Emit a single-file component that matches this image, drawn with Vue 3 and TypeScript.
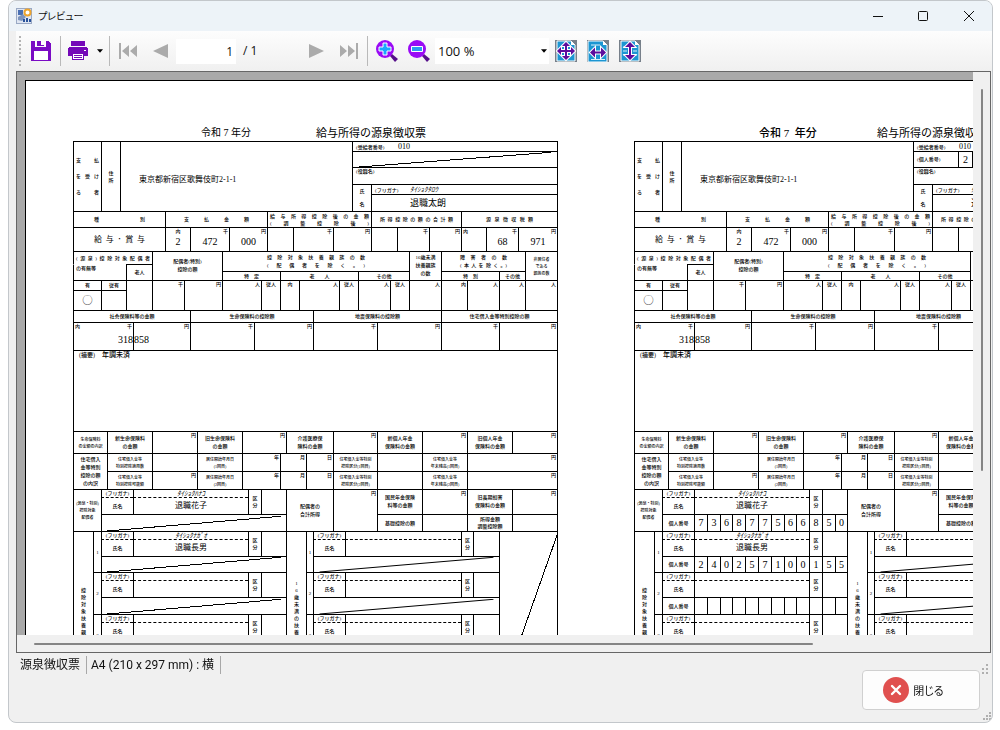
<script setup lang="ts">
import { ref } from 'vue'

interface Cell {
  /** text, one entry per line separated by \n */
  t?: string
  /** small caption placed before the text */
  l?: string
  /** units in the cell's top corners, "left|right" or "right" */
  u?: string
  cs?: number
  rs?: number
  k?: string
  slash?: boolean
}
interface Band {
  cols: number[]
  rows: { h: number; cells: Cell[] }[]
}
interface Slip {
  id: string
  era: string
  bands: Band[]
}

const cell = (t = '', o: Omit<Cell, 't'> = {}): Cell => ({ t, ...o })
const unit = (u = '', t = '', o: Omit<Cell, 't' | 'u'> = {}): Cell => ({ t, u, ...o, k: `top num ${o.k ?? ''}` })

function numberRow(withNumber: boolean, digits: string): Cell[] {
  if (!withNumber) return [cell('', { cs: 13, slash: true })]
  return [cell('個人番号'), ...Array.from({ length: 12 }, (_, i) => cell(digits[i] ?? '', { k: 'num' }))]
}

function headBand(withNumber: boolean): Band {
  const second: Cell[] = withNumber
    ? [cell('', { l: '(個人番号)', cs: 2, k: 'lead' }), cell('2', { k: 'num' }), ...Array.from({ length: 11 }, () => cell())]
    : [cell('', { cs: 14, slash: true })]
  return {
    cols: [28, 19, 232, 19, 26, 14, 13, 13, 14, 13, 13, 14, 13, 13, 14, 13, 13],
    rows: [
      {
        h: 10,
        cells: [
          cell('支　払\nを受け\nる　者', { rs: 5, k: 'spread tall' }),
          cell('住\n所', { rs: 5 }),
          cell('東京都新宿区歌舞伎町2-1-1', { rs: 5, k: 'address' }),
          cell('010', { l: '(受給者番号)', cs: 14, k: 'lead code' }),
        ],
      },
      { h: 16, cells: second },
      { h: 17, cells: [cell('', { l: '(役職名)', cs: 14, k: 'lead top' })] },
      {
        h: 10,
        cells: [cell('氏\n名', { rs: 2, k: 'person-label' }), cell('ﾀｲｼｮｸﾀﾛｳ', { l: '(フリガナ)', cs: 13, k: 'lead kana' })],
      },
      { h: 17, cells: [cell('退職太朗', { cs: 13, k: 'fullname' })] },
    ],
  }
}

const payBand: Band = {
  cols: [92, 25, 39, 38, 26, 40, 38, 26, 32, 32, 25, 32, 39],
  rows: [
    {
      h: 16,
      cells: [
        cell('種別', { k: 'spread wide' }),
        cell('支払金額', { cs: 3, k: 'spread mid' }),
        cell('給与所得控除後の金額\n(調整控除後)', { cs: 3, k: 'spread' }),
        cell('所得控除の額の合計額', { cs: 3, k: 'spread near' }),
        cell('源泉徴収税額', { cs: 3, k: 'spread broad' }),
      ],
    },
    {
      h: 24,
      cells: [
        cell('給与･賞与', { k: 'kind spread' }),
        unit('内', '2', { k: 'midunit' }),
        unit('千', '472'),
        unit('円', '000'),
        cell(),
        unit('千'),
        unit('円'),
        cell(),
        unit('千'),
        unit('円'),
        unit('内|'),
        unit('千', '68'),
        unit('円', '971'),
      ],
    },
  ],
}

const familyBand: Band = {
  cols: [28, 25, 26, 32, 38, 39, 19, 19, 40, 19, 32, 19, 32, 26, 32, 26, 32],
  rows: [
    {
      h: 13,
      cells: [
        cell('(源泉)控除対象配偶者', { cs: 3, k: 'spread' }),
        cell('配偶者(特別)\n控除の額', { cs: 2, rs: 3, k: 'double' }),
        cell('控除対象扶養親族の数\n(配偶者を除く。)', { cs: 7, rs: 2, k: 'spread wide double' }),
        cell('16歳未満\n扶養親族\nの数', { rs: 3, k: 'double' }),
        cell('障害者の数\n(本人を除く。)', { cs: 3, rs: 2, k: 'spread mid double' }),
        cell('非居住者\nである\n親族の数', { rs: 3, k: 'mini' }),
      ],
    },
    { h: 7, cells: [cell('の有無等', { cs: 2, rs: 2, k: 'open lead top' }), cell('老人', { rs: 2 })] },
    {
      h: 9,
      cells: [
        cell('特　定', { cs: 2 }),
        cell('老　　人', { cs: 3 }),
        cell('その他', { cs: 2 }),
        cell('特　別', { cs: 2 }),
        cell('その他'),
      ],
    },
    {
      h: 10,
      cells: [
        cell('有'),
        cell('従有'),
        cell('', { rs: 2 }),
        unit('千', '', { rs: 2 }),
        unit('円', '', { rs: 2 }),
        unit('人', '', { rs: 2 }),
        unit('従人', '', { rs: 2, k: 'midunit' }),
        unit('内', '', { rs: 2, k: 'midunit' }),
        unit('人', '', { rs: 2 }),
        unit('従人', '', { rs: 2, k: 'midunit' }),
        unit('人', '', { rs: 2 }),
        unit('従人', '', { rs: 2, k: 'midunit' }),
        unit('人', '', { rs: 2 }),
        unit('内', '', { rs: 2 }),
        unit('人', '', { rs: 2 }),
        unit('人', '', { rs: 2 }),
        unit('人', '', { rs: 2 }),
      ],
    },
    { h: 20, cells: [cell('◯', { k: 'mark' }), cell()] },
  ],
}

const insuranceBand: Band = {
  cols: [60, 57, 64, 59, 64, 64, 58, 58],
  rows: [
    {
      h: 12,
      cells: ['社会保険料等の金額', '生命保険料の控除額', '地震保険料の控除額', '住宅借入金等特別控除の額'].map((t) => cell(t, { cs: 2 })),
    },
    {
      h: 28,
      cells: [
        unit('内|千', '318', { k: 'joined-left' }),
        unit('円', '858', { k: 'joined-right' }),
        unit('千'),
        unit('円'),
        unit('千'),
        unit('円'),
        unit('千'),
        unit('円'),
      ],
    },
  ],
}

const notesBand: Band = {
  cols: [484],
  rows: [{ h: 81, cells: [cell('年調未済', { l: '(摘要)', k: 'lead top notes' })] }],
}

const loanRow = (turn: number, first: Cell[], label: string): Cell[] => [
  ...first,
  cell(`住宅借入金等\n${label}`, { k: 'mini' }),
  turn === 2 ? unit('円') : cell(),
  cell(`居住開始年月日\n(${turn}回目)`, { k: 'mini' }),
  unit('年'),
  unit('月', '', { cs: 2 }),
  unit('日'),
  cell(`住宅借入金等特別\n控除区分(${turn}回目)`, { k: 'mini' }),
  cell(),
  cell(`住宅借入金等\n年末残高(${turn}回目)`, { k: 'mini' }),
  unit('円', '', { cs: 2 }),
]

const detailBand: Band = {
  cols: [34, 45, 45, 45, 38, 6, 20, 27, 44, 45, 45, 45, 45],
  rows: [
    {
      h: 22,
      cells: [
        cell('生命保険料\nの金額の内訳', { k: 'mini' }),
        cell('新生命保険料\nの金額', { k: 'double' }),
        unit('円'),
        cell('旧生命保険料\nの金額', { k: 'double' }),
        unit('円', '', { cs: 2 }),
        cell('介護医療保\n険料の金額', { cs: 2, k: 'double' }),
        unit('円'),
        cell('新個人年金\n保険料の金額', { k: 'double' }),
        unit('円'),
        cell('旧個人年金\n保険料の金額', { k: 'double' }),
        unit('円'),
      ],
    },
    { h: 18, cells: loanRow(1, [cell('住宅借入\n金等特別\n控除の額\nの内訳', { rs: 2, k: 'double' })], '特別控除適用数') },
    { h: 18, cells: loanRow(2, [], '特別控除可能額') },
  ],
}

const digitCols = [32, 13, 13, 12, 13, 13, 13, 13, 12, 13, 13, 13, 12]

const spouseBand = (withNumber: boolean): Band => ({
  cols: [28, ...digitCols, 47, 44, 45, 45, 45, 45],
  rows: [
    {
      h: 8,
      cells: [
        cell('(源泉・特別)\n控除対象\n配偶者', { rs: 3, k: 'mini' }),
        cell('(フリガナ)', { k: 'furi' }),
        cell('ﾀｲｼｮｸﾊﾅｺ', { cs: 9, k: 'kana' }),
        cell('区\n分', { rs: 2 }),
        cell('', { cs: 2, rs: 2 }),
        cell('配偶者の\n合計所得', { rs: 3, k: 'double' }),
        unit('円', '', { rs: 3 }),
        cell('国民年金保険\n料等の金額', { rs: 2, k: 'double' }),
        unit('円', '', { rs: 2 }),
        cell('旧長期損害\n保険料の金額', { rs: 2, k: 'double' }),
        unit('円', '', { rs: 2 }),
      ],
    },
    { h: 17, cells: [cell('氏名', { k: 'dash' }), cell('退職花子', { cs: 9, k: 'dash name' })] },
    {
      h: 17,
      cells: [...numberRow(withNumber, '736877566850'), cell('基礎控除の額'), cell(), cell('所得金額\n調整控除額'), cell()],
    },
  ],
})

const vertical = (s: string): string => [...s].join('\n')

function dependentsBand(withNumber: boolean): Band {
  const people = [
    { kana: 'ﾀｲｼｮｸﾅｶﾞｵ', name: '退職長男', digits: '240257100155', last: 16 },
    { kana: '', name: '', digits: '', last: 17 },
    { kana: '', name: '', digits: '', last: 16 },
    { kana: '', name: '', digits: '', last: 17 },
  ]
  return {
    cols: [20, 8, ...digitCols, 20, 7, 32, 116, 12, 26, 58],
    rows: people.flatMap((p, i) => [
      {
        h: 8,
        cells: [
          ...(i === 0 ? [cell(vertical('控除対象扶養親族'), { rs: 12 })] : []),
          cell(String(i + 1), { rs: 3 }),
          cell('(フリガナ)', { k: 'furi' }),
          cell(p.kana, { cs: 9, k: 'kana' }),
          cell('区\n分', { rs: 2 }),
          cell('', { cs: 2, rs: 2 }),
          ...(i === 0 ? [cell(vertical('16歳未満の扶養親族'), { rs: 12 })] : []),
          cell(String(i + 1), { rs: 3 }),
          cell('(フリガナ)', { k: 'furi' }),
          cell(),
          cell('区\n分', { rs: 2 }),
          cell('', { rs: 2 }),
          ...(i === 0 ? [cell('', { rs: 12, slash: true, k: 'long' })] : []),
        ],
      },
      {
        h: 17,
        cells: [cell('氏名', { k: 'dash' }), cell(p.name, { cs: 9, k: 'dash name' }), cell('氏名', { k: 'dash' }), cell('', { k: 'dash' })],
      },
      { h: p.last, cells: [...numberRow(withNumber, p.digits), cell('', { cs: 4, slash: true })] },
    ]),
  }
}

const makeSlip = (id: string, era: string, withNumber: boolean): Slip => ({
  id,
  era,
  bands: [
    headBand(withNumber),
    payBand,
    familyBand,
    insuranceBand,
    notesBand,
    detailBand,
    spouseBand(withNumber),
    dependentsBand(withNumber),
  ],
})

const slips: Slip[] = [makeSlip('plain', '令和 7 年分', false), makeSlip('numbered', '令和 7  年分', true)]

const page = ref('1')
const zoom = ref('100 %')
</script>

<template>
  <main class="window">
    <header class="titlebar">
      <svg class="app-icon" viewBox="0 0 16 16" aria-hidden="true">
        <rect x="0.5" y="0.5" width="15" height="15" fill="#dfe6f2" stroke="#9aa9c4" />
        <rect x="2" y="2" width="5" height="5" fill="#4a70b4" />
        <path d="M2 9l5-3 3 3-4 4-4-1z" fill="#7d94bd" />
        <circle cx="11.500" cy="4.500" r="3" fill="#fff" stroke="#eda52f" stroke-width="2" />
        <path d="M7 11h2v3H7zM10 10h2v4h-2zM13 11h2v3h-2z" fill="#29539b" />
      </svg>
      <h1>プレビュー</h1>
      <div class="caption-buttons">
        <button type="button" aria-label="最小化"><svg viewBox="0 0 12 12"><path d="M1 6.500h10" /></svg></button>
        <button type="button" aria-label="最大化"><svg viewBox="0 0 12 12"><rect x="1.500" y="1.500" width="9" height="9" rx="1" /></svg></button>
        <button type="button" aria-label="ウィンドウを閉じる"><svg viewBox="0 0 12 12"><path d="M1 1l10 10M11 1L1 11" /></svg></button>
      </div>
    </header>

    <nav class="toolbar" aria-label="ツールバー">
      <span class="grip"></span>
      <button type="button" class="tool save" aria-label="保存">
        <svg viewBox="0 0 20 20" shape-rendering="crispEdges">
          <path d="M0 0h4v6h11V0h2l3 3v17H0z" fill="#7a0bc4" />
          <path d="M6 0h7v5H6z" fill="#7a0bc4" />
          <path d="M4 0h1v6H4zM14 0h1v6h-1zM10 0h3v4h-3z" fill="#fff" />
          <path d="M3 10h14v9H3z" fill="#fff" />
        </svg>
      </button>
      <span class="sep"></span>
      <button type="button" class="tool" aria-label="印刷">
        <svg viewBox="0 0 20 20" shape-rendering="crispEdges">
          <path d="M3 0h14v5H3zM0 7h1V6h18v1h1v8h-4v-3H4v3H0z" fill="#7408b8" />
          <path d="M4 12h12v7H4z" fill="#7408b8" />
          <path d="M5 13h10v5H5zM16 9h2v1h-2z" fill="#fff" />
          <path d="M6 14h8v1H6zM6 16h8v1H6z" fill="#7408b8" />
        </svg>
      </button>
      <button type="button" class="drop" aria-label="印刷オプション"><svg viewBox="0 0 5 3"><path d="M0 0h5L2.500 3z" /></svg></button>
      <span class="sep"></span>
      <button type="button" class="tool gray" aria-label="最初のページ">
        <svg viewBox="0 0 20 20"><path d="M1 2h2v16H1zM11 4v12l-7-6zM19 4v12l-7-6z" /></svg>
      </button>
      <button type="button" class="tool gray" aria-label="前のページ">
        <svg viewBox="0 0 20 20"><path d="M17 3v14L2 10z" /></svg>
      </button>
      <input v-model="page" class="page" aria-label="ページ番号" />
      <span class="total">/ 1</span>
      <button type="button" class="tool gray" aria-label="次のページ">
        <svg viewBox="0 0 20 20"><path d="M3 3v14l15-7z" /></svg>
      </button>
      <button type="button" class="tool gray" aria-label="最後のページ">
        <svg viewBox="0 0 20 20"><path d="M17 2h2v16h-2zM1 4v12l7-6zM9 4v12l7-6z" /></svg>
      </button>
      <span class="sep"></span>
      <button type="button" class="zoom-tool" aria-label="拡大">
        <svg viewBox="0 0 22 22">
          <path d="M14 16l2-2 6 5-3 3z" fill="#56108a" />
          <circle cx="9" cy="9" r="9" fill="#9a0bf5" />
          <path d="M7 3h4v4h4v4h-4v4H7v-4H3V7h4z" fill="#1ba6ff" stroke="#fff" />
        </svg>
      </button>
      <button type="button" class="zoom-tool" aria-label="縮小">
        <svg viewBox="0 0 22 22">
          <path d="M14 16l2-2 6 5-3 3z" fill="#56108a" />
          <circle cx="9" cy="9" r="9" fill="#9a0bf5" />
          <path d="M3.500 6.500h11v5h-11z" fill="#2a9cf0" stroke="#fff" />
        </svg>
      </button>
      <span class="combo">
        <select v-model="zoom" aria-label="表示倍率">
          <option>50 %</option>
          <option>100 %</option>
          <option>200 %</option>
        </select>
        <svg viewBox="0 0 5 3" aria-hidden="true"><path d="M0 0h5L2.500 3z" /></svg>
      </span>
      <button type="button" class="fit" aria-label="ページ全体">
        <svg viewBox="0 0 22 22">
          <path d="M0 0h22v22H0z" fill="#77808a" />
          <path d="M2 1h14l4 4v16H2z" fill="#1c96d2" stroke="#fff" />
          <path d="M16 1v4h4z" fill="#fff" />
          <path d="M11 2l4 4h-3v4h4V7l4 4-4 4v-3h-4v4h3l-4 4-4-4h3v-4H6v3l-4-4 4-4v3h4V6H7z" fill="#5d0d9d" stroke="#fff" stroke-width="2" paint-order="stroke" />
        </svg>
      </button>
      <button type="button" class="fit" aria-label="ページ幅">
        <svg viewBox="0 0 22 22">
          <path d="M0 0h22v22H0z" fill="#77808a" />
          <path d="M1 1h15l4 4v17H1z" fill="#1c96d2" stroke="#fff" />
          <path d="M16 1v4h4z" fill="#fff" />
          <path d="M4 5h9" stroke="#d9f0fb" />
          <path d="M3 12.500l5-5v4h6v-4l5 5-5 5v-4H8v4z" fill="#5d0d9d" stroke="#fff" stroke-width="2" paint-order="stroke" />
          <path d="M4 19.500h14" stroke="#d9f0fb" />
        </svg>
      </button>
      <button type="button" class="fit" aria-label="ページの高さ">
        <svg viewBox="0 0 22 22">
          <path d="M0 0h22v22H0z" fill="#77808a" />
          <path d="M2 1h14l4 4v16H2z" fill="#1c96d2" stroke="#fff" />
          <path d="M16 1v4h4z" fill="#fff" />
          <path d="M4 7h4M4 11h4M4 15h4M14 11h4M14 15h4" stroke="#d9f0fb" />
          <path d="M11 2l5 5h-4v8h4l-5 5-5-5h4V7H6z" fill="#5d0d9d" stroke="#fff" stroke-width="2" paint-order="stroke" />
        </svg>
      </button>
    </nav>

    <section class="preview" aria-label="印刷プレビュー">
      <div class="canvas">
        <div class="paper">
          <article v-for="slip in slips" :key="slip.id" class="slip" :class="slip.id">
            <h2><span class="era">{{ slip.era }}</span><span>給与所得の源泉徴収票</span></h2>
            <div class="frame">
              <table v-for="(band, b) in slip.bands" :key="b">
                <colgroup>
                  <col v-for="(w, i) in band.cols" :key="i" :style="{ width: w + 'px' }" />
                </colgroup>
                <tbody>
                  <tr v-for="(row, r) in band.rows" :key="r" :style="{ height: row.h + 'px' }">
                    <td v-for="(c, i) in row.cells" :key="i" :colspan="c.cs" :rowspan="c.rs" :class="c.k">
                      <span v-if="c.u" class="unit"><span v-for="(u, n) in c.u.split('|')" :key="n">{{ u }}</span></span>
                      <span v-if="c.l" class="label">{{ c.l }}</span>
                      <template v-if="c.t">
                        <span v-for="(line, n) in c.t.split('\n')" :key="n" class="line">{{ line }}</span>
                      </template>
                      <svg v-if="c.slash" class="slash" viewBox="0 0 100 100" preserveAspectRatio="none" shape-rendering="crispEdges">
                        <line :x1="c.k === 'long' ? 0 : 3" y1="100" :x2="c.k === 'long' ? 100 : 97" y2="2" />
                      </svg>
                    </td>
                  </tr>
                </tbody>
              </table>
            </div>
          </article>
        </div>
      </div>
      <div class="vbar"><span></span></div>
      <div class="hbar"><span></span></div>
    </section>

    <footer class="status">
      <div class="info">
        <span>源泉徴収票</span>
        <span>A4 (210 x 297 mm) : 横</span>
      </div>
      <button type="button" class="close">
        <svg viewBox="0 0 26 26" aria-hidden="true">
          <circle cx="13" cy="13" r="13" fill="#e0504f" />
          <path d="M9 9l8 8M17 9l-8 8" stroke="#fff" stroke-width="2.400" stroke-linecap="round" />
        </svg>
        閉じる
      </button>
      <svg class="dots upper" viewBox="0 0 8 12" aria-hidden="true">
        <path d="M4 0h2v2H4zM0 4h2v2H0zM4 4h2v2H4zM0 8h2v2H0zM4 8h2v2H4z" />
      </svg>
      <svg class="dots lower" viewBox="0 0 8 12" aria-hidden="true">
        <path d="M6 2h2v2H6zM3 5h2v2H3zM6 5h2v2H6zM0 8h2v2H0zM3 8h2v2H3zM6 8h2v2H6z" />
      </svg>
    </footer>
  </main>
</template>

<style>
html,
body {
  background: #fff;
  overflow: hidden;
}
</style>

<style scoped>
* {
  box-sizing: border-box;
}
.window {
  display: flex;
  flex-direction: column;
  height: calc(100vh - 7px);
  margin: 0 7px 0 8px;
  border: 1px solid #c3c7cb;
  border-radius: 8px;
  overflow: hidden;
  background: #f0f0f0;
  color: #111;
  font: 12px/16px "Open Sans", "Noto Sans CJK JP", sans-serif;
}
button {
  padding: 0;
  border: 0;
  background: none;
  color: inherit;
  font: inherit;
}
button svg {
  display: block;
  width: 100%;
  height: 100%;
}

/* title bar */
.titlebar {
  display: flex;
  flex: none;
  align-items: center;
  height: 30px;
  padding: 0 8px 0 7px;
  background: #edf3f8;
}
.app-icon {
  width: 16px;
  height: 16px;
}
h1 {
  margin: 0 0 0 6px;
  font: 10px/16px "Noto Sans CJK JP", sans-serif;
  font-feature-settings: "palt";
}
.caption-buttons {
  display: flex;
  margin-left: auto;
}
.caption-buttons button {
  display: grid;
  place-items: center;
  width: 45px;
  height: 28px;
}
.caption-buttons button:last-child {
  width: 30px;
  margin-left: 9px;
}
.caption-buttons svg {
  width: 12px;
  height: 12px;
  fill: none;
  stroke: #111;
}

/* toolbar */
.toolbar {
  display: flex;
  flex: none;
  align-items: center;
  height: 40px;
  margin-left: 7px;
  padding-left: 3px;
  background: linear-gradient(#fdfdfd, #f0f0f0);
}
.grip {
  width: 2px;
  height: 30px;
  margin-right: 10px;
  background: repeating-linear-gradient(#b4b4b4 0 2px, transparent 2px 4px);
}
.tool {
  width: 20px;
  height: 20px;
}
.sep {
  width: 1px;
  height: 30px;
  margin: 0 8px 0 9px;
  background: #b9b9b9;
}
.save + .sep {
  margin-right: 7px;
}
.drop {
  width: 6px;
  height: 4px;
  margin-left: 9px;
}
.drop + .sep {
  margin-left: 6px;
}
.drop svg,
.combo svg {
  fill: #000;
}
.gray {
  fill: #ababab;
}
.gray + .gray {
  margin-left: 13px;
}
.page {
  width: 60px;
  height: 25px;
  margin-left: 5px;
  padding: 0 3px;
  border: 0;
  background: #fff;
  color: #111;
  font: 12px/24px "Open Sans", sans-serif;
  text-align: right;
}
.total {
  width: 63px;
  margin-left: 7px;
}
.total + .gray + .gray {
  margin-left: 13px;
}
.gray + .sep {
  margin-left: 8px;
}
.zoom-tool {
  width: 22px;
  height: 22px;
  margin-right: 10px;
}
.combo {
  display: flex;
  align-items: center;
  width: 114px;
  height: 26px;
  margin: 0 6px 0 -5px;
  padding-right: 2px;
  background: #fff;
}
.combo select {
  flex: 1;
  height: 26px;
  padding: 0 3px;
  border: 0;
  background: none;
  color: #111;
  font: 13px/24px "Open Sans", sans-serif;
  appearance: none;
}
.combo svg {
  width: 6px;
  height: 4px;
}
.fit {
  width: 22px;
  height: 22px;
  margin-right: 10px;
}

/* preview */
.preview {
  display: grid;
  flex: 1;
  grid-template: minmax(0, 1fr) 17px / minmax(0, 1fr) 17px;
  min-height: 0;
  margin: 0 1px 0 7px;
  border: 1px solid #666;
}
.canvas {
  overflow: auto;
  padding: 8px 0 0 8px;
  background: #a9a9a9;
  scrollbar-width: none;
}
.paper {
  display: flex;
  gap: 76px;
  width: 1123px;
  min-height: 794px;
  padding-left: 47px;
  border: 1px solid #000;
  background: #fff;
}
.vbar {
  padding: 17px 0 0 8px;
}
.vbar span {
  display: block;
  width: 2px;
  height: 70%;
  border-radius: 1px;
  background: #858585;
}
.hbar {
  padding: 8px 0 0 17px;
}
.hbar span {
  display: block;
  width: 83%;
  height: 2px;
  border-radius: 1px;
  background: #858585;
}

/* slip */
.slip {
  flex: none;
  width: 485px;
  color: #000;
  font: 5px/7px "Liberation Serif", "Noto Sans CJK JP", serif;
}
h2 {
  display: flex;
  align-items: flex-end;
  height: 60px;
  margin: 0;
  font-size: 11px;
  font-weight: 400;
  line-height: 16px;
  white-space: pre;
}
.era {
  width: 243px;
  padding-left: 128px;
  font-size: 10px;
}
.numbered .era {
  padding-left: 125px;
  font-size: 11px;
  font-weight: 500;
}
.frame {
  border: solid #000;
  border-width: 0 1px 1px 0;
}
table {
  width: 100%;
  border-spacing: 0;
  table-layout: fixed;
}
td {
  padding: 0;
  border: solid #000;
  border-width: 1px 0 0 1px;
  font-weight: 500;
  text-align: center;
  vertical-align: middle;
  white-space: nowrap;
}
.line {
  display: block;
}
.unit {
  display: flex;
  height: 7px;
  padding: 0 1px;
  font-size: 5px;
  line-height: 7px;
}
.unit span:last-child {
  margin-left: auto;
}
.midunit .unit span {
  margin: 0 auto;
}
.top {
  vertical-align: top;
}
.num .line {
  font-size: 10px;
  font-weight: 400;
  line-height: 14px;
}
.joined-left .line {
  line-height: 20px;
  text-align: right;
}
.joined-right .line {
  line-height: 20px;
  text-align: left;
}
.spread .line {
  padding: 0 2px;
  text-align-last: justify;
}
.near .line {
  padding: 0 8px;
}
.mid .line {
  padding: 0 18px;
}
.broad .line {
  padding: 0 24px;
}
.wide .line {
  padding: 0 20px;
}
.wide.double .line {
  padding: 0 44px;
}
.tall .line {
  line-height: 16px;
}
.kind .line {
  padding: 0 20px;
  font-size: 8px;
  font-weight: 400;
  line-height: 14px;
}
.double .line {
  line-height: 8px;
}
.mini .line {
  font-size: 4px;
}
.open {
  border-top-color: transparent;
}
.dash {
  border-top-style: dashed;
}
.furi .line {
  font-size: 5px;
  line-height: 6px;
}
.lead {
  text-align: left;
}
.lead .label {
  display: inline-block;
  width: 45px;
  padding-left: 3px;
}
.lead .line {
  display: inline-block;
}
.open.lead .line {
  padding-left: 2px;
}
.code .line {
  font-size: 8px;
  font-weight: 400;
}
.kana .line {
  font: italic 7px/7px "Noto Sans CJK JP", sans-serif;
}
.kana .label {
  width: 38px;
}
.address {
  padding: 6px 0 0 18px;
  font-size: 8px;
  font-weight: 400;
  line-height: 12px;
  text-align: left;
}
.person-label .line {
  line-height: 13px;
}
.fullname .line {
  padding-left: 38px;
  font-size: 9px;
  font-weight: 400;
  line-height: 14px;
  text-align: left;
}
.name .line {
  font-size: 8px;
  font-weight: 400;
  line-height: 14px;
}
.mark .line {
  font-size: 10px;
  line-height: 14px;
}
.notes .label {
  width: 28px;
  font-size: 6px;
  padding-left: 5px;
}
.notes .line {
  font-size: 7px;
  line-height: 8px;
}
.slash {
  display: block;
  width: 100%;
  height: 15px;
}
.long .slash {
  height: 165px;
}
.slash line {
  stroke: #000;
  stroke-width: 1px;
  vector-effect: non-scaling-stroke;
}

/* status */
.status {
  position: relative;
  display: flex;
  flex: none;
  justify-content: space-between;
  height: 69px;
  padding: 0 12px 0 7px;
}
.info {
  display: flex;
  align-self: flex-start;
  margin-top: 3px;
  font-family: Roboto, "Noto Sans CJK JP", sans-serif;
}
.info span {
  padding: 1px 6px 1px 4px;
  border-right: 1px solid #a8a8a8;
}
.close {
  display: flex;
  align-items: center;
  justify-content: center;
  gap: 4px;
  width: 118px;
  height: 40px;
  margin-top: 17px;
  padding-right: 15px;
  padding-left: 0;
  border: 1px solid #d0d0d0;
  border-radius: 4px;
  background: #fdfdfd;
  font-family: "Noto Sans CJK JP", sans-serif;
  font-size: 11px;
  font-feature-settings: "palt";
}
.close svg {
  width: 26px;
  height: 26px;
}
.dots {
  position: absolute;
  right: 2px;
  width: 8px;
  height: 12px;
  fill: #b0b0b0;
}
.upper {
  top: 11px;
}
.lower {
  right: 1px;
  bottom: 0;
}
</style>
